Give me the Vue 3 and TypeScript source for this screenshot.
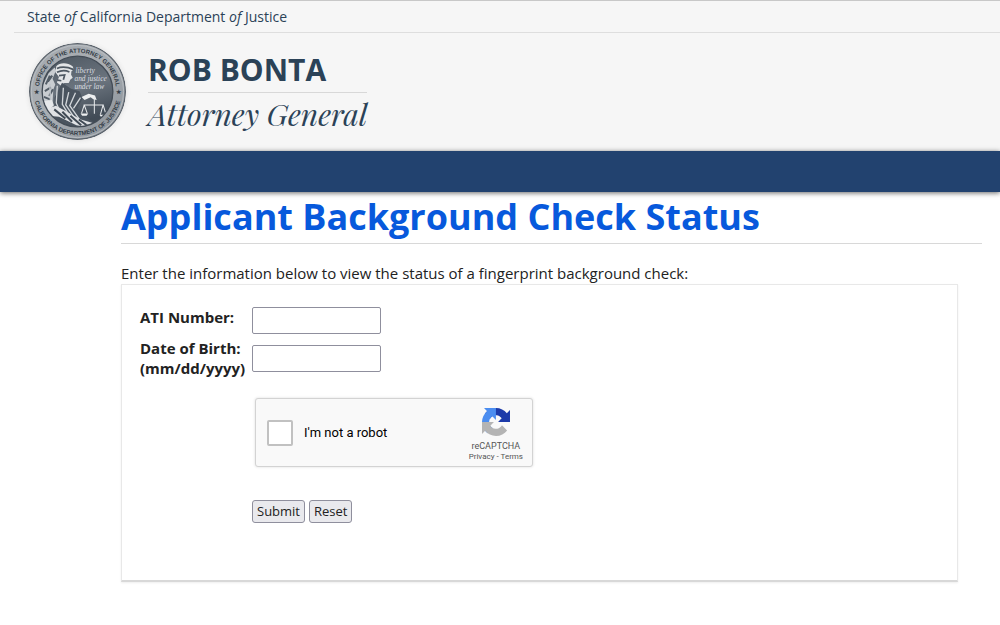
<script setup lang="ts">
import { ref } from 'vue'

const atiNumber = ref('')
const birthDate = ref('')
const human = ref(false)

function reset(): void {
  atiNumber.value = ''
  birthDate.value = ''
  human.value = false
}
</script>

<template>
  <div class="page">
    <header class="masthead">
      <div class="agency">State <em>of</em> California Department <em>of</em> Justice</div>
      <div class="identity">
        <svg class="seal" viewBox="28 22 288 288" role="img" aria-label="Office of the Attorney General seal">
          <defs>
            <linearGradient id="ring" x1="0" y1="0" x2="1" y2="1">
              <stop offset="0" stop-color="#a3a8ae" />
              <stop offset="0.5" stop-color="#a9aeb3" />
              <stop offset="1" stop-color="#858c94" />
            </linearGradient>
            <linearGradient id="disc" x1="0" y1="0" x2="0.3" y2="1">
              <stop offset="0" stop-color="#4d5761" />
              <stop offset="0.55" stop-color="#6b747e" />
              <stop offset="1" stop-color="#414b56" />
            </linearGradient>
            <clipPath id="inner"><circle cx="172" cy="166" r="103" /></clipPath>
            <path id="arcTop" d="M57 166 A115 115 0 0 1 287 166" />
            <path id="arcBottom" d="M42 166 A130 130 0 0 0 302 166" />
          </defs>
          <circle cx="172" cy="166" r="142" fill="url(#ring)" stroke="#59616a" stroke-width="4" />
          <circle cx="172" cy="166" r="137" fill="none" stroke="#c4c8cb" stroke-width="2" />
          <circle cx="172" cy="166" r="105" fill="url(#disc)" stroke="#434c56" stroke-width="4" />
          <g clip-path="url(#inner)">
            <path d="M70 145 L86 112 L104 95 L108 104 L98 128 L106 145 L100 161 L98 200 L78 206 L66 188Z" fill="#c9cdd1" />
            <path d="M78 145 L90 119 M75 165 L93 154 M84 137 L97 119 M88 179 L99 159 M72 182 L92 190" stroke="#535d67" stroke-width="6" />
            <path d="M109 91 C118 80 142 78 158 92 L161 101 L154 106 L153 116 L158 125 L151 130 L146 141 L132 141 L123 149 L111 139 L117 123 L106 108Z" fill="#e3e5e7" />
            <path d="M111 98 C127 90 144 94 161 101 M111 109 C128 101 139 104 148 108 M117 119 L134 117 L130 131 M112 132 L124 134" fill="none" stroke="#4e5862" stroke-width="5" />
            <path d="M126 140 L153 158 L178 165 L187 187 L172 216 L198 243 L246 272 L210 284 L109 256 L86 235 L104 213 L104 184Z" fill="#4a545f" />
            <path d="M112 149 L109 200 L127 241 M130 155 L127 204 L155 249 M146 168 L137 206 L169 253 M166 170 L149 208 L184 258 M181 184 L160 216" fill="none" stroke="#d1d5d9" stroke-width="4" />
            <path d="M80 218 L108 208 L135 223 L182 249 L230 263 L224 276 L169 266 L117 241 L92 239Z" fill="#e0e2e5" />
            <path d="M103 219 L136 246 M127 226 L156 256 M151 238 L183 266 M176 249 L205 270" stroke="#414b56" stroke-width="6" />
            <path d="M90 143 L92 212" stroke="#bec3c8" stroke-width="4" />
            <path d="M73 194 L96 191 L102 207 L88 221 L72 217Z" fill="#e6e8ea" />
            <path d="M184 182 L205 173 L224 178 L229 191 L219 189 L211 183 L193 191Z" fill="#eef0f1" />
            <path d="M222 183 L222 232 M190 206 L250 206 M192 206 L184 231 M192 206 L201 231 M248 206 L240 235 M248 206 L257 235" fill="none" stroke="#e8eaec" stroke-width="3" />
            <path d="M181 231 H204 L199 238 H186Z M237 235 H260 L255 242 H242Z" fill="#eef0f1" />
            <g class="motto">
              <text x="166" y="111">liberty</text>
              <text x="163" y="135">and justice</text>
              <text x="163" y="159">under law</text>
            </g>
          </g>
          <g class="ring-text">
            <text><textPath href="#arcTop" startOffset="50%">OFFICE OF THE ATTORNEY GENERAL</textPath></text>
            <text><textPath href="#arcBottom" startOffset="50%">CALIFORNIA DEPARTMENT OF JUSTICE</textPath></text>
            <text x="50" y="174">★</text>
            <text x="295" y="174">★</text>
          </g>
        </svg>
        <div class="official">
          <div class="name">ROB BONTA</div>
          <div class="role">Attorney General</div>
        </div>
      </div>
    </header>
    <nav class="bar" aria-label="Main"></nav>

    <main class="content">
      <h1>Applicant Background Check Status</h1>
      <p>Enter the information below to view the status of a fingerprint background check:</p>
      <form class="panel" @submit.prevent @reset.prevent="reset">
        <div class="field">
          <label for="ati">ATI Number:</label>
          <input id="ati" v-model="atiNumber" type="text" />
        </div>
        <div class="field two-line">
          <label for="dob">Date of Birth: (mm/dd/yyyy)</label>
          <input id="dob" v-model="birthDate" type="text" />
        </div>
        <div class="captcha">
          <label class="robot">
            <input v-model="human" type="checkbox" />
            <span>I'm not a robot</span>
          </label>
          <div class="brand">
            <svg class="mark" viewBox="0 0 64 64" aria-hidden="true">
              <path fill="#1c3aa9" d="M64 31.955l-.033-1.37V4.687l-7.16 7.16C50.948 4.674 42.033.093 32.05.093c-10.4 0-19.622 4.96-25.458 12.64l11.736 11.86a15.55 15.55 0 0 1 4.754-5.334c2.05-1.6 4.952-2.906 8.968-2.906.485 0 .86.057 1.135.163 4.976.393 9.288 3.14 11.828 7.124l-8.307 8.307L64 31.953" />
              <path fill="#4b8df0" d="M31.862.094l-1.37.033H4.594l7.16 7.16C4.58 13.147 0 22.06 0 32.046c0 10.4 4.96 19.622 12.64 25.458L24.5 45.768a15.55 15.55 0 0 1-5.334-4.754c-1.6-2.05-2.906-4.952-2.906-8.968 0-.485.057-.86.163-1.135.393-4.976 3.14-9.288 7.124-11.828l8.307 8.307L31.86.095" />
              <path fill="#b4b4b4" d="M.001 32.045l.033 1.37v25.898l7.16-7.16c5.86 7.173 14.774 11.754 24.76 11.754 10.4 0 19.622-4.96 25.458-12.64l-11.736-11.86a15.55 15.55 0 0 1-4.754 5.334c-2.05 1.6-4.952 2.906-8.968 2.906-.485 0-.86-.057-1.135-.163-4.976-.393-9.288-3.14-11.828-7.124l8.307-8.307c-10.522.04-22.4.066-27.295-.005" />
            </svg>
            <div class="brand-name">reCAPTCHA</div>
            <div class="legal"><a href="#privacy">Privacy</a> - <a href="#terms">Terms</a></div>
          </div>
        </div>
        <div class="actions">
          <button type="submit">Submit</button>
          <button type="reset">Reset</button>
        </div>
      </form>
    </main>
  </div>
</template>

<style>
body {
  margin: 0;
  background: #fff;
}
</style>

<style scoped>
.page {
  font-family: "Open Sans", sans-serif;
  font-size: 15px;
  line-height: 20px;
  color: #222;
}

.masthead {
  padding-left: 14px;
  padding-bottom: 12px;
  border-top: 1px solid #c8c8c8;
  background: #f6f6f6;
  color: #2b4257;
}

.agency {
  padding: 6px 13px 5px;
  border-bottom: 1px solid #dedede;
  font-size: 14px;
}

.identity {
  display: flex;
  align-items: flex-start;
  gap: 22px;
  padding: 10px 15px 0;
}

.seal {
  width: 97px;
  height: 97px;
  margin-bottom: -1px;
  border-radius: 50%;
  box-shadow: 0 0 5px #ddd;
}

.motto {
  font: italic 22px "Liberation Serif", serif;
  fill: #dcdfe2;
}

.ring-text {
  font: 700 18px "Liberation Sans", sans-serif;
  fill: #333c46;
  text-anchor: middle;
}

.name {
  padding: 7px 0 3px;
  border-bottom: 1px solid #d8d8d8;
  font-size: 30px;
  font-weight: 700;
  line-height: 39px;
}

.role {
  font: italic 30px/42px "Playfair Display", "Liberation Serif", serif;
}

.bar {
  position: relative;
  height: 41px;
  background: #22426f;
  box-shadow: 0 1px 5px rgba(0, 0, 0, 0.6);
}

.content {
  padding: 0 18px 44px 121px;
}

h1 {
  margin: 0;
  padding-bottom: 1px;
  border-bottom: 1px solid #d8d8d8;
  color: #0759dc;
  font-size: 36px;
  font-weight: 700;
  line-height: 50px;
}

p {
  margin: 19px 0 1px;
}

.panel {
  margin-right: 24px;
  padding: 22px 18px 57px;
  border: 1px solid #e8e8e8;
  border-bottom-width: 2px;
  border-bottom-color: #d8d8d8;
  box-shadow: 0 1px 2px #eee;
}

.field {
  display: flex;
  gap: 4px;
  margin-bottom: 4px;
}

.two-line {
  align-items: center;
}

.field label {
  width: 108px;
  font-size: 15px;
  font-weight: 700;
}

.field input {
  box-sizing: border-box;
  width: 129px;
  height: 27px;
  padding: 2px 4px;
  border: 1px solid #8f8f9d;
  border-radius: 2px;
  background: #fff;
  font: inherit;
}

.captcha {
  display: flex;
  justify-content: space-between;
  box-sizing: border-box;
  width: 278px;
  margin: 20px 0 0 115px;
  border: 1px solid #d3d3d3;
  border-radius: 3px;
  background: #f9f9f9;
  box-shadow: 0 0 3px #ddd;
  color: #000;
  font-family: Roboto, sans-serif;
}

.robot {
  display: flex;
  align-items: center;
  gap: 11px;
  padding-left: 11px;
  font-size: 13px;
}

.robot input {
  appearance: none;
  box-sizing: border-box;
  width: 26px;
  height: 26px;
  margin: 0;
  border: 2px solid #c1c1c1;
  border-radius: 2px;
  background: #fff;
}

.robot input:checked {
  background: #4b8df0;
}

.brand {
  display: flex;
  flex-direction: column;
  align-items: center;
  padding: 9px 9px 4px 0;
  color: #555;
}

.mark {
  width: 28px;
  height: 28px;
}

.brand-name {
  margin-top: 4px;
  font-size: 9px;
  line-height: 12px;
}

.legal {
  font-size: 8px;
  line-height: 10px;
}

.legal a {
  color: inherit;
  text-decoration: none;
}

.actions {
  display: flex;
  gap: 4px;
  margin: 33px 0 0 112px;
}

.actions button {
  padding: 0 4px;
  border: 1px solid #8f8f9d;
  border-radius: 3px;
  background: #e9e9ed;
  color: #222;
  font: 13px/21px "Open Sans", sans-serif;
}
</style>
